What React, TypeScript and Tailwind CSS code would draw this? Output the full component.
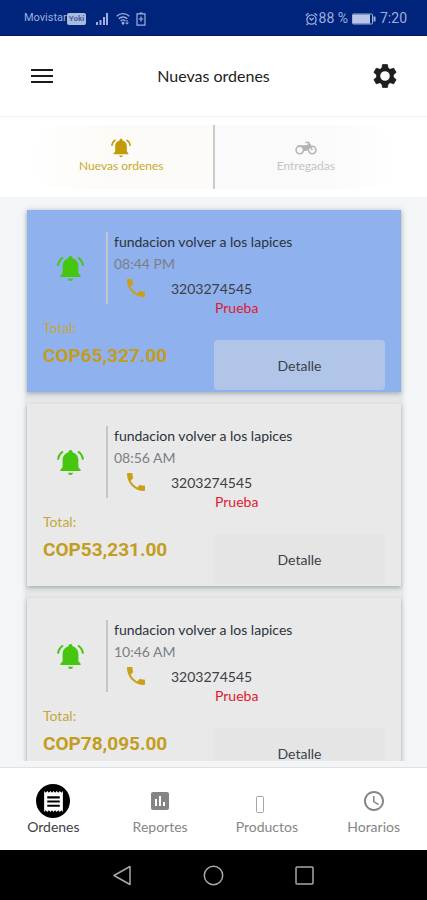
import { useState } from "react";
import { MdAccessTime, MdInsertChart, MdLocalPhone, MdReceipt } from "react-icons/md";

const orders = [
  { id: 1, name: "fundacion volver a los lapices", time: "08:44 PM", phone: "3203274545", note: "Prueba", total: "COP65,327.00", isNew: true },
  { id: 2, name: "fundacion volver a los lapices", time: "08:56 AM", phone: "3203274545", note: "Prueba", total: "COP53,231.00", isNew: false },
  { id: 3, name: "fundacion volver a los lapices", time: "10:46 AM", phone: "3203274545", note: "Prueba", total: "COP78,095.00", isNew: false },
];

function BellIcon({ size, className }: { size: number; className?: string }) {
  return (
    <svg className={className} width={size} height={size} viewBox="0 0 24 24" fill="currentColor">
      <path d="M12 .8c-1 0-1.700.7-1.700 1.600v.5C7.100 3.700 5 6.500 5 9.900v6.400l-2 2.200v1h18v-1l-2-2.200V9.900c0-3.400-2.100-6.200-5.300-7v-.5C13.700 1.500 13 .8 12 .8zM9.800 21h4.400a2.200 2.200 0 0 1-4.400 0z" />
      <path d="M5.300 2.200C2.800 3.900 1.200 6.500.9 9.500M18.700 2.200c2.500 1.700 4.100 4.300 4.400 7.300" fill="none" stroke="currentColor" strokeWidth="1.800" />
    </svg>
  );
}

function GearIcon() {
  return (
    <svg width="26" height="26" viewBox="-13 -13 26 26" fill="none" stroke="currentColor">
      <circle r="6.800" strokeWidth="4" />
      {[0, 60, 120, 180, 240, 300].map(a => (
        <path key={a} d="M-2.400-11.400h4.800l.8 4h-6.400z" transform={`rotate(${a})`} fill="currentColor" strokeWidth=".8" strokeLinejoin="round" />
      ))}
    </svg>
  );
}

function MotorcycleIcon() {
  return (
    <svg width="22" height="20" viewBox="0 0 22 20" fill="none" stroke="currentColor" strokeWidth="1.600">
      <circle cx="4.800" cy="12" r="3.700" />
      <circle cx="17.200" cy="12" r="3.700" />
      <path d="M10.500 4.500h3.200l3.500 7.500M2.500 8h8.500l3.800-1.500" />
      <path d="M6 8h5.500l3.800-1.700.8 1.400-4.600 5.300H8.500C8.500 10.500 7.500 9 6 8z" fill="currentColor" stroke="none" />
    </svg>
  );
}

function StatusBar() {
  return (
    <div className="flex h-9 shrink-0 items-center justify-between border-b border-[#001a5c] bg-[#00247c] pr-5 pl-6 font-['Roboto',sans-serif] text-[#9db0dc]">
      <div className="flex items-center pt-0.5">
        <span className="text-[11px]">Movistar</span>
        <span className="rounded-xs bg-[#a9badf] px-0.5 text-[8px] leading-3 font-bold text-[#4a62a4]">Yoki</span>
        <svg className="ml-2.5" width="14" height="13" viewBox="0 0 14 13" fill="currentColor">
          <path d="M0 10h2v3H0zM3.500 8h2v5h-2zM7 5h2v8H7zM10 1h2v12h-2z" />
        </svg>
        <svg className="ml-1.5" width="14" height="13" viewBox="0 0 14 13" fill="none" stroke="currentColor" strokeWidth="1.300">
          <path d="M.7 4.200c3.400-3.500 9.100-3.500 12.600 0M2.700 6.700c2.400-2.300 6.200-2.300 8.600 0M4.700 9c1.300-1.200 3.300-1.200 4.600 0" />
          <circle cx="7" cy="11.200" r=".8" fill="currentColor" />
          <path d="M11 8v4M9.500 10.600l1.500 1.600 1.500-1.600" strokeWidth="1" />
        </svg>
        <svg className="ml-1.5" width="10" height="14" viewBox="0 0 10 14" fill="none" stroke="currentColor" strokeWidth="1.200">
          <path d="M1 1.800h8v11.400H1zM3.500 1h3M5 4.500v5M2.700 7h4.600" />
        </svg>
      </div>
      <div className="flex items-center pt-0.5 text-[14px]">
        <svg width="13" height="14" viewBox="0 0 13 14" fill="none" stroke="currentColor" strokeWidth="1.300">
          <circle cx="6.500" cy="7.500" r="4.600" />
          <path d="M.8 3.500 3.500 1.200M12.200 3.500 9.500 1.200M2.800 11.500 1.600 13M10.200 11.500l1.200 1.500M4.500 6l2 2 2.300-2" />
        </svg>
        <span className="ml-px">88 %</span>
        <svg className="ml-1" width="24" height="12" viewBox="0 0 24 12" fill="none" stroke="currentColor">
          <rect x=".5" y="1" width="20" height="10" rx="1" />
          <path d="M1 1.500h17v9H1z" fill="#b9c6e6" stroke="none" />
          <path d="M22.500 3.500v5" strokeWidth="2" />
        </svg>
        <span className="ml-1">7:20</span>
      </div>
    </div>
  );
}

function OrderCard({ order }: { order: (typeof orders)[number] }) {
  return (
    <article className={`pt-5 pb-0.5 shadow-[0_2px_4px_rgba(60,80,90,0.35)] ${order.isNew ? "bg-[#8fb1ed]" : "bg-[#e9e9e9]"}`}>
      <div className="flex items-start">
        <div className="mt-0.5 flex h-[72px] w-[81px] items-center justify-center border-r-2 border-[#c3c7cd] pl-2">
          <BellIcon size={27} className="text-[#45c60f]" />
        </div>
        <div className="flex-1 pl-1.5 text-[14px]">
          <h2 className="leading-6 text-[#2b333c]">{order.name}</h2>
          <p className="leading-5 text-[#7b7f85]">{order.time}</p>
          <div className="flex h-7 items-center pl-2.5">
            <MdLocalPhone size={24} className="text-[#c9a01a]" />
            <a href={`tel:${order.phone}`} className="ml-[23px] text-[#3b4046]">{order.phone}</a>
          </div>
          <p className="pl-[101px] leading-3 text-[#e0192d]">{order.note}</p>
        </div>
      </div>
      <div className="flex items-start justify-between px-4">
        <div className="pt-0.5">
          <p className="text-[14px] leading-6 text-[#c5a73a]">Total:</p>
          <p className="font-['Roboto',sans-serif] text-[19px] leading-8 font-bold text-[#c39d1d]">{order.total}</p>
        </div>
        <button type="button" className={`mt-[26px] h-[50px] w-1/2 rounded text-[14px] text-[#3a4149] ${order.isNew ? "bg-[#b1c5e8]" : "bg-[#e5e5e5]"}`}>
          Detalle
        </button>
      </div>
    </article>
  );
}

const navItems = [
  { key: "ordenes", label: "Ordenes", icon: <span className="flex size-[34px] items-center justify-center rounded-full bg-black"><MdReceipt size={25} className="text-white" /></span> },
  { key: "reportes", label: "Reportes", icon: <MdInsertChart size={24} /> },
  { key: "productos", label: "Productos", icon: <svg className="mt-2 mr-3.5" width="8" height="18" viewBox="0 0 8 18" fill="none" stroke="#a5a5a5"><rect x=".5" y=".5" width="7" height="16" rx="1" /></svg> },
  { key: "horarios", label: "Horarios", icon: <MdAccessTime size={24} /> },
];

export default function App() {
  const [tab, setTab] = useState("nuevas");
  const [section, setSection] = useState("ordenes");

  return (
    <div className="flex h-screen flex-col bg-white font-['Lato',sans-serif]">
      <StatusBar />

      {/* Header */}
      <header className="flex h-[81px] shrink-0 items-center justify-between border-b border-[#f1f1f1] px-[26px]">
        <button type="button" aria-label="Menu" className="flex h-8 w-8 items-center justify-center">
          <svg width="22" height="16" viewBox="0 0 22 16" fill="#1c1c1c">
            <path d="M0 1h22v2H0zM0 7h22v2H0zM0 13h22v2H0z" />
          </svg>
        </button>
        <h1 className="text-[16px] text-[#222]">Nuevas ordenes</h1>
        <button type="button" aria-label="Ajustes" className="flex h-8 w-8 items-center justify-center text-[#1e1e1e]">
          <GearIcon />
        </button>
      </header>

      {/* Tabs */}
      <div className="flex h-20 shrink-0 items-center px-[30px] text-[12px]">
        <button type="button" onClick={() => setTab("nuevas")} aria-pressed={tab === "nuevas"}
          className="flex h-16 flex-1 flex-col items-center justify-center rounded-l-full border-r-2 border-[#cbcbcb] bg-linear-to-r from-white to-[#fcfbf7] to-40% pb-0.5 text-[#c9a92c]">
          <BellIcon size={20} className="text-[#c39a08]" />
          <span className="leading-4">Nuevas ordenes</span>
        </button>
        <button type="button" onClick={() => setTab("entregadas")} aria-pressed={tab === "entregadas"}
          className="flex h-16 flex-1 flex-col items-center justify-center rounded-r-full bg-linear-to-l from-white to-[#fafafa] to-40% pb-0.5 text-[#c4c4c4]">
          <span className="text-[#b4b4b4]"><MotorcycleIcon /></span>
          <span className="leading-4">Entregadas</span>
        </button>
      </div>

      {/* Orders */}
      <main className="min-h-0 flex-1 overflow-y-auto bg-[#f3f5f6] pt-[13px] pr-[26px] pl-[27px] [scrollbar-width:none]">
        <div className="flex flex-col gap-3 bg-[#e5e7e8] shadow-[0_0_6px_rgba(60,80,90,0.2)]">
          {orders.map(o => <OrderCard key={o.id} order={o} />)}
        </div>
      </main>

      {/* Bottom nav */}
      <nav className="flex h-[89px] shrink-0 border-t-[6px] border-[#f3f5f6] bg-white shadow-[inset_0_1px_0_#dfe2e4]">
        {navItems.map(n => (
          <button key={n.key} type="button" onClick={() => setSection(n.key)}
            className={`flex flex-1 flex-col items-center pt-4 text-[14px] ${section === n.key ? "text-[#3f3f3f]" : "text-[#858585]"}`}>
            <span className="flex h-9 items-center">{n.icon}</span>
            <span className="leading-4">{n.label}</span>
          </button>
        ))}
      </nav>

      {/* System buttons */}
      <div className="flex h-[50px] shrink-0 items-center justify-center gap-[70px] bg-black text-[#a8a8a8]">
        <svg width="21" height="21" viewBox="0 0 21 21" fill="none" stroke="currentColor" strokeWidth="1.500" strokeLinejoin="round">
          <path d="M18 1.500v18L2 10.500z" />
        </svg>
        <svg width="21" height="21" viewBox="0 0 21 21" fill="none" stroke="currentColor" strokeWidth="1.500">
          <circle cx="10.500" cy="10.500" r="9.200" />
        </svg>
        <svg width="21" height="21" viewBox="0 0 21 21" fill="none" stroke="currentColor" strokeWidth="1.500">
          <rect x="2" y="2" width="17" height="17" rx="1" />
        </svg>
      </div>
    </div>
  );
}
